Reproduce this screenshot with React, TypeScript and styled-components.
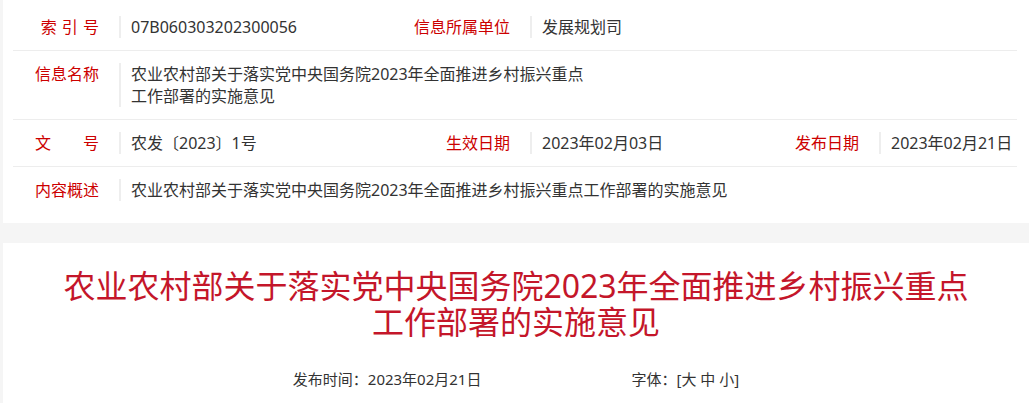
import { FC } from "react";
import styled, { createGlobalStyle } from "styled-components";

const GlobalStyle = createGlobalStyle`
  html, body {
    margin: 0;
    padding: 0;
    background: #f5f5f5;
  }
  body {
    font-family: "Noto Sans", "Noto Sans CJK SC", "Microsoft YaHei", sans-serif;
    color: #333;
  }
`;

const Page = styled.div`
  padding-left: 3px;
`;

const InfoCard = styled.div`
  background: #fff;
  padding: 4px 12px 10px 10px;
`;

const Row = styled.div`
  display: grid;
  grid-template-columns: 106px 291px 120px 229px 120px 1fr;
  align-items: start;
  padding: 12px 0;
  border-bottom: 1px solid #ededed;
  font-size: 16px;
  line-height: 22px;

  &:last-child {
    border-bottom: none;
  }
`;

const Label = styled.div`
  color: #cc0000;
  text-align: right;
  padding-right: 20px;
  white-space: pre;
  word-spacing: 1px;
`;

const Value = styled.div<{ $span?: string; $max?: number }>`
  box-sizing: border-box;
  border-left: 2px solid #eeeeee;
  padding-left: 10px;
  color: #333;
  grid-column: ${(p) => p.$span || "auto"};
  max-width: ${(p) => (p.$max ? `${p.$max}px` : "none")};
`;

const ArticleCard = styled.div`
  background: #fff;
  margin-top: 20px;
  padding: 25px 50px 60px;
`;

const Title = styled.h1`
  margin: 0;
  text-align: center;
  color: #c4162a;
  font-size: 32px;
  line-height: 36px;
  font-weight: 400;
`;

const Meta = styled.div`
  margin-top: 29px;
  display: flex;
  justify-content: center;
  gap: 150px;
  font-size: 15px;
  line-height: 20px;
  color: #333;
`;

const SizeLink = styled.span`
  cursor: pointer;
`;

const App: FC = () => {
  return (
    <>
      <GlobalStyle />
      <Page>
        <InfoCard>
          <Row>
            <Label>索 引 号</Label>
            <Value>07B060303202300056</Value>
            <Label>信息所属单位</Label>
            <Value $span="4 / -1">发展规划司</Value>
          </Row>
          <Row>
            <Label>信息名称</Label>
            <Value $span="2 / -1" $max={472}>
              农业农村部关于落实党中央国务院2023年全面推进乡村振兴重点工作部署的实施意见
            </Value>
          </Row>
          <Row>
            <Label>文　　号</Label>
            <Value>农发〔2023〕1号</Value>
            <Label>生效日期</Label>
            <Value>2023年02月03日</Value>
            <Label>发布日期</Label>
            <Value>2023年02月21日</Value>
          </Row>
          <Row>
            <Label>内容概述</Label>
            <Value $span="2 / -1">
              农业农村部关于落实党中央国务院2023年全面推进乡村振兴重点工作部署的实施意见
            </Value>
          </Row>
        </InfoCard>
        <ArticleCard>
          <Title>
            农业农村部关于落实党中央国务院2023年全面推进乡村振兴重点工作部署的实施意见
          </Title>
          <Meta>
            <span>发布时间：2023年02月21日</span>
            <span>
              字体：[<SizeLink>大</SizeLink> <SizeLink>中</SizeLink>{" "}
              <SizeLink>小</SizeLink>]
            </span>
          </Meta>
        </ArticleCard>
      </Page>
    </>
  );
};

export default App;
